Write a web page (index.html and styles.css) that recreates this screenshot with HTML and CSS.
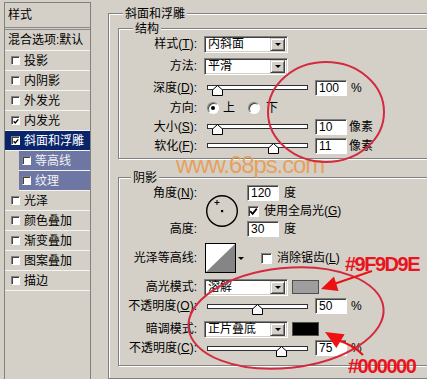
FILE: index.html
```html
<!DOCTYPE html>
<html lang="zh">
<head>
<meta charset="utf-8">
<title>图层样式</title>
<link rel="stylesheet" href="styles.css">
</head>
<body>
<div class="dialog">
  <aside class="style-list">
    <div class="list-head">样式</div>
    <div class="list-row blend">混合选项:默认</div>
    <div class="list-row"><span class="cb"></span>投影</div>
    <div class="list-row"><span class="cb"></span>内阴影</div>
    <div class="list-row"><span class="cb"></span>外发光</div>
    <div class="list-row"><span class="cb"><svg width="7" height="7" viewBox="0 0 7 7"><path d="M0.8 3.2L2.6 5.2L6.2 1" stroke="#000" stroke-width="1.5" fill="none"/></svg></span>内发光</div>
    <div class="list-row selected"><span class="cb"><svg width="7" height="7" viewBox="0 0 7 7"><path d="M0.8 3.2L2.6 5.2L6.2 1" stroke="#000" stroke-width="1.5" fill="none"/></svg></span>斜面和浮雕</div>
    <div class="list-row sub"><span class="cb"></span>等高线</div>
    <div class="list-row sub"><span class="cb"></span>纹理</div>
    <div class="list-row"><span class="cb"></span>光泽</div>
    <div class="list-row"><span class="cb"></span>颜色叠加</div>
    <div class="list-row"><span class="cb"></span>渐变叠加</div>
    <div class="list-row"><span class="cb"></span>图案叠加</div>
    <div class="list-row"><span class="cb"></span>描边</div>
  </aside>

  <main class="settings">
    <section class="group outer">
      <div class="group-title">斜面和浮雕</div>

      <section class="group structure">
        <div class="group-title">结构</div>
        <div class="row r22">
          <span class="label">样式(<u>T</u>):</span>
          <div class="select"><span class="value">内斜面</span><span class="drop"></span></div>
        </div>
        <div class="row r22">
          <span class="label">方法:</span>
          <div class="select"><span class="value">平滑</span><span class="drop"></span></div>
        </div>
        <div class="row r21">
          <span class="label">深度(<u>D</u>):</span>
          <div class="slider"><span class="thumb" style="left:10%"><svg width="11" height="11" viewBox="0 0 11 11"><path d="M0.5 10.5V5L5.5 0.5L10.5 5V10.5Z" fill="#fafafa" stroke="#000"/></svg></span></div>
          <span class="num">100</span><span class="unit">%</span>
        </div>
        <div class="row r19">
          <span class="label">方向:</span>
          <span class="radio on"></span><span class="radio-text">上</span>
          <span class="radio second"></span><span class="radio-text down">下</span>
        </div>
        <div class="row r19">
          <span class="label">大小(<u>S</u>):</span>
          <div class="slider"><span class="thumb" style="left:10%"><svg width="11" height="11" viewBox="0 0 11 11"><path d="M0.5 10.5V5L5.5 0.5L10.5 5V10.5Z" fill="#fafafa" stroke="#000"/></svg></span></div>
          <span class="num">10</span><span class="unit px">像素</span>
        </div>
        <div class="row r19">
          <span class="label">软化(<u>F</u>):</span>
          <div class="slider"><span class="thumb" style="left:67%"><svg width="11" height="11" viewBox="0 0 11 11"><path d="M0.5 10.5V5L5.5 0.5L10.5 5V10.5Z" fill="#fafafa" stroke="#000"/></svg></span></div>
          <span class="num">11</span><span class="unit px">像素</span>
        </div>
      </section>

      <section class="group shading">
        <div class="group-title">阴影</div>
        <div class="angle-grid">
          <span class="label a1">角度(<u>N</u>):</span>
          <svg class="dial" width="34" height="34" viewBox="0 0 34 34"><circle cx="17" cy="17" r="15.3" fill="none" stroke="#000" stroke-width="1.4"/><rect x="16" y="16" width="2.2" height="2.2" fill="#000"/><path d="M9.5 8.5h5M12 6v5" stroke="#000" stroke-width="1"/></svg>
          <span class="ctrl c1"><span class="num first">120</span><span class="unit deg">度</span></span>
          <span class="ctrl c2"><span class="check"><svg width="9" height="9" viewBox="0 0 9 9"><path d="M1.2 4.2L3.6 6.8L7.8 1.6" stroke="#000" stroke-width="1.8" fill="none"/></svg></span><span class="check-text">使用全局光(<u>G</u>)</span></span>
          <span class="label a3">高度:</span>
          <span class="ctrl c3"><span class="num first">30</span><span class="unit deg">度</span></span>
        </div>
        <div class="row contour-row">
          <span class="label">光泽等高线:</span>
          <span class="contour"><svg width="31" height="30" viewBox="0 0 31 30"><rect x="0.5" y="0.5" width="30" height="29" fill="#fff" stroke="#000"/><polygon points="1,29 30,1 30,29" fill="#858585"/></svg><span class="mini-drop"></span></span>
          <span class="check aa"></span><span class="check-text">消除锯齿(<u>L</u>)</span>
        </div>
        <div class="row r20 gap2">
          <span class="label">高光模式:</span>
          <div class="select"><span class="value">溶解</span><span class="drop"></span></div>
          <span class="swatch light"></span>
        </div>
        <div class="row r18">
          <span class="label">不透明度(<u>O</u>):</span>
          <div class="slider"><span class="thumb" style="left:50%"><svg width="11" height="11" viewBox="0 0 11 11"><path d="M0.5 10.5V5L5.5 0.5L10.5 5V10.5Z" fill="#fafafa" stroke="#000"/></svg></span></div>
          <span class="num">50</span><span class="unit">%</span>
        </div>
        <div class="row r20 gap4">
          <span class="label">暗调模式:</span>
          <div class="select"><span class="value">正片叠底</span><span class="drop"></span></div>
          <span class="swatch dark"></span>
        </div>
        <div class="row r18">
          <span class="label">不透明度(<u>C</u>):</span>
          <div class="slider"><span class="thumb" style="left:75%"><svg width="11" height="11" viewBox="0 0 11 11"><path d="M0.5 10.5V5L5.5 0.5L10.5 5V10.5Z" fill="#fafafa" stroke="#000"/></svg></span></div>
          <span class="num">75</span><span class="unit">%</span>
        </div>
      </section>
    </section>
  </main>
</div>

<div class="watermark">www.68ps.com</div>

<svg class="annot" width="427" height="379" viewBox="0 0 427 379">
  <ellipse cx="326" cy="112" rx="58" ry="50" fill="none" stroke="#d42a40" stroke-width="2"/>
  <ellipse cx="286" cy="318" rx="98" ry="50" transform="rotate(-6 286 318)" fill="none" stroke="#d42a40" stroke-width="2"/>
  <path d="M372 271L334 284" stroke="#ee1111" stroke-width="2" fill="none"/>
  <polygon points="321,289 338.5,291 334,276.5" fill="#ee1111"/>
  <path d="M363 355Q353 345 340 341" stroke="#ee1111" stroke-width="2" fill="none"/>
  <polygon points="325,332 344.6,334.3 336.4,348.1" fill="#ee1111"/>
</svg>
<div class="hex hex-gray">#9F9D9E</div>
<div class="hex hex-black">#000000</div>
</body>
</html>
```

FILE: styles.css
```css
* { box-sizing: border-box; }
html, body { margin: 0; padding: 0; }
body {
  width: 427px;
  height: 379px;
  overflow: hidden;
  position: relative;
  background: #d4d0c8;
  color: #000;
  font: 12px/14px "Liberation Sans", "Noto Sans CJK SC", sans-serif;
}
u { text-decoration: underline; }

.dialog { display: flex; align-items: flex-start; height: 379px; overflow: hidden; }

/* ---- left style list ---- */
.style-list {
  flex: none;
  width: 87px;
  height: 390px;
  margin: 2px 0 0 4px;
  border: 1px solid #808080;
}
.list-head {
  height: 27px;
  padding: 5px 0 0 3px;
  border-bottom: 3px double #8a8a8a;
}
.list-row {
  display: flex;
  align-items: center;
  gap: 4px;
  height: 20px;
  padding-left: 6px;
  border-bottom: 1px solid #f4f4f4;
  white-space: nowrap;
}
.list-row.blend { height: 21px; padding-left: 3px; }
.list-row.selected { background: #0a246a; color: #fff; }
.list-row.sub { margin-left: 14px; padding-left: 3px; background: #6e77a4; color: #f2f2f2; }
.cb {
  flex: none;
  width: 9px;
  height: 9px;
  background: #fff;
  border: 1px solid;
  border-color: #808080 #fff #fff #808080;
  box-shadow: inset 1px 1px #404040;
  display: flex;
  align-items: center;
  justify-content: center;
}
.cb svg { margin: 1px 0 0 1px; }

/* ---- right settings ---- */
.settings { flex: none; width: 330px; margin-left: 17px; }
.group {
  border: 1px solid #808080;
  box-shadow: inset 1px 1px #fff, 1px 1px #fff;
}
.group-title {
  width: fit-content;
  padding: 0 2px;
  margin-top: -7px;
  line-height: 14px;
  background: #d4d0c8;
}
.outer { margin-top: 13px; padding-bottom: 12px; }
.outer > .group-title { margin-left: 14px; }
.structure { margin: 7px 0 0 9px; padding-bottom: 3px; }
.structure > .group-title { margin-left: 14px; margin-bottom: -3px; }
.shading { margin: 18px 0 0 9px; padding-bottom: 8px; }
.shading > .group-title { margin-left: 12px; }

.row { display: flex; align-items: center; white-space: nowrap; }
.r22 { height: 22px; }
.r21 { height: 21px; }
.r20 { height: 20px; }
.r19 { height: 19px; }
.r18 { height: 18px; }
.gap2 { margin-top: 2px; }
.gap4 { margin-top: 4px; }

.label { flex: none; width: 78px; text-align: right; white-space: nowrap; }

.select {
  flex: none;
  margin-left: 7px;
  width: 84px;
  height: 17px;
  display: flex;
  align-items: center;
  padding: 2px 2px 2px 3px;
  background: #fff;
  border: 1px solid;
  border-color: #808080 #fff #fff #808080;
  box-shadow: inset 1px 1px #404040, inset -1px -1px #d4d0c8;
}
.select .value { flex: 1; }
.drop, .mini-drop {
  flex: none;
  display: flex;
  align-items: center;
  justify-content: center;
}
.drop {
  width: 15px;
  height: 13px;
  background: #d4d0c8;
  border: 1px solid;
  border-color: #d4d0c8 #404040 #404040 #d4d0c8;
  box-shadow: inset 1px 1px #fff, inset -1px -1px #808080;
}
.drop::after, .mini-drop::after {
  content: "";
  border-left: 3px solid transparent;
  border-right: 3px solid transparent;
  border-top: 3px solid #000;
}
.mini-drop { width: 10px; height: 30px; }

.slider {
  flex: none;
  position: relative;
  margin-left: 10px;
  width: 101px;
  height: 5px;
  border: 1px solid #303030;
  background: #fff;
}
.thumb {
  position: absolute;
  top: -1px;
  width: 11px;
  height: 11px;
  margin-left: -6px;
  display: block;
}
.thumb svg { display: block; }

.num {
  flex: none;
  margin-left: 7px;
  width: 32px;
  height: 16px;
  padding: 1px 0 0 3px;
  line-height: 13px;
  background: #fff;
  border: 1px solid;
  border-color: #808080 #fff #fff #808080;
  box-shadow: inset 1px 1px #404040;
}
.num.first { margin-left: 0; }
.unit { margin-left: 4px; }
.unit.px { margin-left: 2px; }
.unit.deg { margin-left: 5px; }

.radio {
  flex: none;
  position: relative;
  width: 12px;
  height: 12px;
  margin-left: 10px;
  border-radius: 50%;
  background: #fff;
  border: 1px solid;
  border-color: #808080 #fff #fff #808080;
  box-shadow: inset 1px 1px #404040;
}
.radio.on::after {
  content: "";
  position: absolute;
  left: 3px;
  top: 3px;
  width: 4px;
  height: 4px;
  border-radius: 50%;
  background: #000;
}
.radio.second { margin-left: 13px; }
.radio-text { margin-left: 4px; }
.radio-text.down { margin-left: 6px; }

.check {
  flex: none;
  width: 11px;
  height: 11px;
  background: #fff;
  border: 1px solid;
  border-color: #808080 #fff #fff #808080;
  box-shadow: inset 1px 1px #404040;
  display: flex;
  align-items: center;
  justify-content: center;
}
.check-text { margin-left: 5px; }
.check.aa { margin-left: 15px; }

.angle-grid {
  display: grid;
  grid-template-columns: 78px 34px auto;
  grid-template-rows: 16px 20px 16px;
  column-gap: 8px;
  align-items: center;
}
.a1 { grid-column: 1; grid-row: 1; }
.a3 { grid-column: 1; grid-row: 3; }
.dial { grid-column: 2; grid-row: 1 / 4; display: block; }
.ctrl { grid-column: 3; display: flex; align-items: center; white-space: nowrap; }
.c1 { grid-row: 1; }
.c2 { grid-row: 2; padding-left: 1px; }
.c3 { grid-row: 3; }

.contour-row { height: 34px; margin-top: 4px; }
.contour { flex: none; margin-left: 8px; display: flex; align-items: center; }
.contour svg { display: block; }

.swatch {
  flex: none;
  margin-left: 4px;
  width: 27px;
  height: 14px;
  border: 1px solid #505050;
}
.swatch.light { background: #9f9d9e; }
.swatch.dark { background: #000; }

/* ---- overlays ---- */
.watermark {
  position: absolute;
  left: 176px;
  top: 152px;
  font: 24px/26px "Liberation Sans", sans-serif;
  letter-spacing: -1.1px;
  color: rgba(234, 152, 72, 0.85);
  pointer-events: none;
}
.annot {
  position: absolute;
  left: 0;
  top: 0;
  pointer-events: none;
}
.hex {
  position: absolute;
  font: bold 20px/20px "Liberation Sans", sans-serif;
  letter-spacing: -1.5px;
  color: #e8141e;
  white-space: nowrap;
}
.hex-gray { left: 345px; top: 254px; }
.hex-black { left: 348px; top: 356px; }
```
